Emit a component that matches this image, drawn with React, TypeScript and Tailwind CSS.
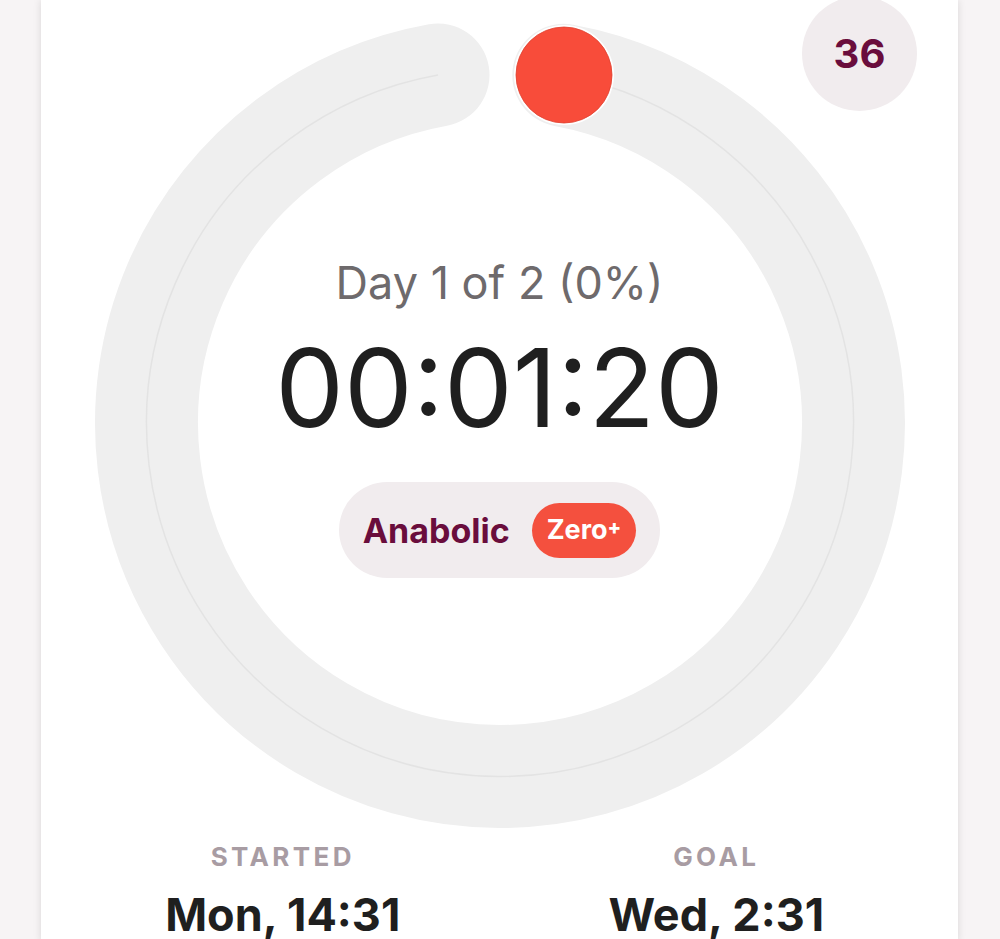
import React from "react";

const CX = 459;
const CY = 423;
const R = 353.5;

function pt(deg: number) {
  const t = (deg * Math.PI) / 180;
  return [CX + R * Math.sin(t), CY - R * Math.cos(t)];
}

const [sx, sy] = pt(10.4);
const [ex, ey] = pt(349.9);
const arc = `M ${sx} ${sy} A ${R} ${R} 0 1 1 ${ex} ${ey}`;

export default function App() {
  return (
    <div
      className="min-h-screen w-full bg-[#f7f4f5] overflow-hidden"
      style={{ fontFamily: "Inter, 'Noto Sans', sans-serif" }}
    >
      <div className="ml-[41px] w-[917px] bg-white shadow-[0_0_8px_rgba(0,0,0,0.12)] min-h-[939px] relative">
        <div className="absolute right-[41px] top-[-4px] w-[115px] h-[115px] rounded-full bg-[#f1ecee] flex items-center justify-center">
          <span className="text-[40px] font-bold text-[#6a0d3c] leading-none">36</span>
        </div>

        <div className="grid">
          <svg
            className="col-start-1 row-start-1"
            width="917"
            height="840"
            viewBox="0 0 917 840"
          >
            <path d={arc} fill="none" stroke="#efefef" strokeWidth="103" strokeLinecap="round" />
            <path d={arc} fill="none" stroke="#e3e3e3" strokeWidth="1.5" />
            <circle cx={523} cy={75} r={50} fill="#ffffff" />
            <circle cx={523} cy={75} r={48} fill="#f84c3a" stroke="#e0402f" strokeWidth="0.8" />
          </svg>
          <div className="col-start-1 row-start-1 flex flex-col items-center pt-[256px]">
            <div className="text-[45px] leading-[54px] text-[#6e6a6c]">Day 1 of 2 (0%)</div>
            <div className="text-[109px] leading-[122px] mt-[16px] text-[#1f1f1f] font-normal">00:01:20</div>
            <div className="mt-[34px] h-[96px] w-[321px] rounded-full bg-[#f1ecee] flex items-center justify-center gap-[22px]">
              <span className="text-[34px] font-bold text-[#6a0d3c]">Anabolic</span>
              <span className="h-[55px] px-[15px] rounded-full bg-[#f4503e] flex items-center text-white font-bold text-[27px]">
                Zero<sup className="text-[20px] relative top-[-3px] font-extrabold">+</sup>
              </span>
            </div>
          </div>
        </div>

        <div className="grid grid-cols-2 px-[25px] mt-[2px]">
          <div className="flex flex-col items-center">
            <div className="text-[26px] font-bold tracking-[0.13em] text-[#a89ca3] leading-[30px]">STARTED</div>
            <div className="text-[45px] font-bold text-[#1f1f1f] leading-[54px] mt-[16px]">Mon, 14:31</div>
          </div>
          <div className="flex flex-col items-center">
            <div className="text-[26px] font-bold tracking-[0.13em] text-[#a89ca3] leading-[30px]">GOAL</div>
            <div className="text-[45px] font-bold text-[#1f1f1f] leading-[54px] mt-[16px]">Wed, 2:31</div>
          </div>
        </div>
      </div>
    </div>
  );
}
